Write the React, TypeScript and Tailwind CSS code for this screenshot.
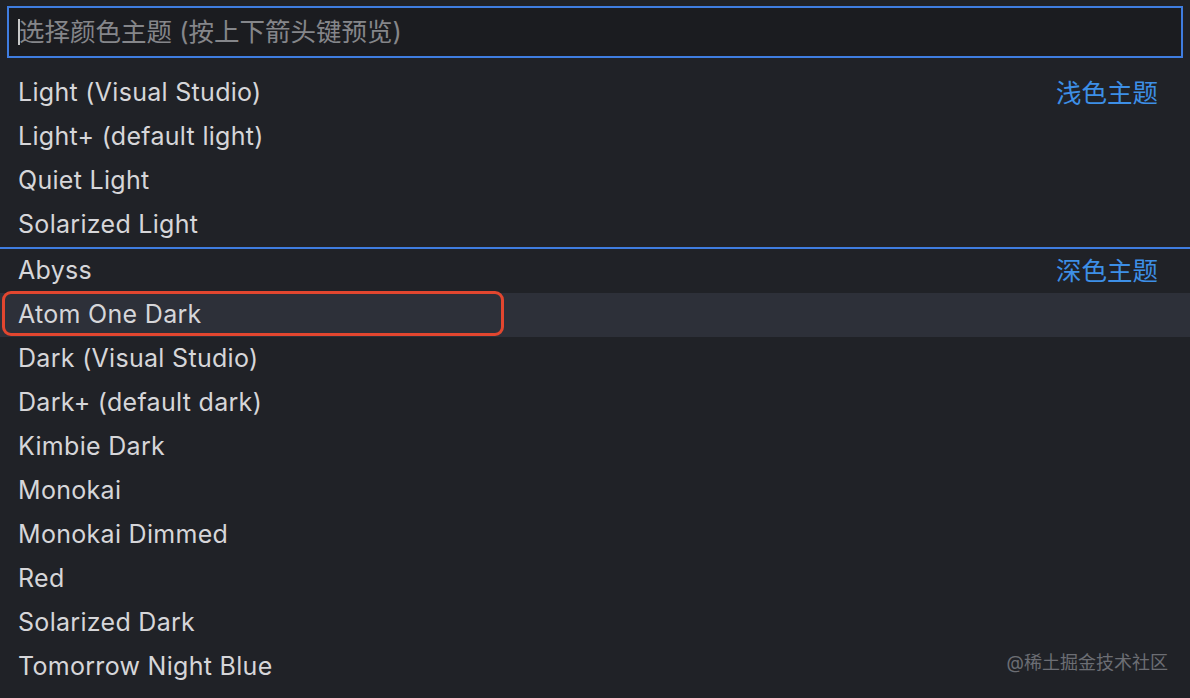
import React from 'react';

const lightThemes = ['Light (Visual Studio)', 'Light+ (default light)', 'Quiet Light', 'Solarized Light'];
const darkThemes = [
  'Abyss',
  'Atom One Dark',
  'Dark (Visual Studio)',
  'Dark+ (default dark)',
  'Kimbie Dark',
  'Monokai',
  'Monokai Dimmed',
  'Red',
  'Solarized Dark',
  'Tomorrow Night Blue',
];

const font = { fontFamily: 'Inter, "Noto Sans CJK SC", sans-serif' };

function Row({ name, label, active }: { name: string; label?: string; active?: boolean }) {
  return (
    <div className={`relative h-[44px] flex items-center justify-between pl-[18px] pr-[32px] ${active ? 'bg-[#2d3039]' : ''}`}>
      {active && (
        <div className="absolute left-[2px] top-[-2px] w-[502px] h-[45px] rounded-[9px] border-[3px] border-[#e2462f]" />
      )}
      <span className="relative text-[25px] text-[#d6d6d9] tracking-[0.3px]">{name}</span>
      {label && <span className="text-[25.5px] text-[#3d8fe6]">{label}</span>}
    </div>
  );
}

export default function App() {
  return (
    <div className="w-[1190px] h-[698px] bg-[#202227] relative overflow-hidden" style={font}>
      <div className="pt-[6px] px-[7px]">
        <div className="h-[52px] border-[2px] border-[#3f7de0] bg-[#1b1c20] flex items-center pl-[9px]">
          <div className="w-[2px] h-[26px] bg-[#c8c8c8]" />
          <span className="text-[25.5px] text-[#85868a] -ml-[1px]">选择颜色主题 (按上下箭头键预览)</span>
        </div>
      </div>
      <div className="mt-[13px]">
        {lightThemes.map((t, i) => (
          <Row key={t} name={t} label={i === 0 ? '浅色主题' : undefined} />
        ))}
        <div className="h-[2px] bg-[#3f7de0]" />
        {darkThemes.map((t, i) => (
          <Row key={t} name={t} label={i === 0 ? '深色主题' : undefined} active={t === 'Atom One Dark'} />
        ))}
      </div>
      <div className="absolute right-[22px] bottom-[22px] text-[18px] text-[#6c6e74]">@稀土掘金技术社区</div>
    </div>
  );
}
